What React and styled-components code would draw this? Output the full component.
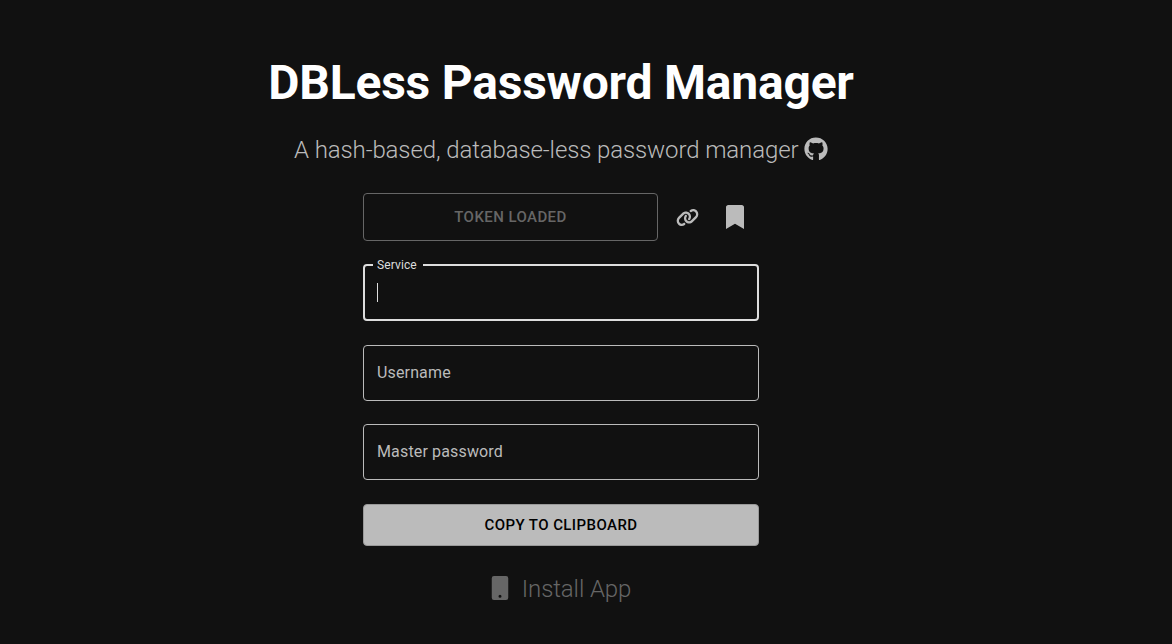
import React from 'react';
import styled, { createGlobalStyle } from 'styled-components';
import { FaGithub, FaBookmark } from 'react-icons/fa';
import { FaLink } from 'react-icons/fa6';

const GlobalStyle = createGlobalStyle`
  * { box-sizing: border-box; }
  body { margin: 0; background: #111; color: #fff; font-family: Roboto, sans-serif; overflow: hidden; }
`;
const Page = styled.main`
  width: 1122px;
  height: 644px;
  padding-top: 55px;
  display: flex;
  flex-direction: column;
  align-items: center;
`;
const Title = styled.h1`
  margin: 0;
  font-size: 48px;
  line-height: 56px;
  font-weight: 700;
  letter-spacing: -0.21px;
  white-space: nowrap;
`;
const Subtitle = styled.p`
  margin: 23px 0 0;
  display: flex;
  align-items: center;
  gap: 5.5px;
  height: 32px;
  font-size: 24px;
  font-weight: 300;
  letter-spacing: -0.11px;
  line-height: 32px;
  color: #bbb;
  white-space: nowrap;

  svg { margin-bottom: 2px; }
`;
const Form = styled.form`
  width: 396px;
  margin-top: 27px;
  display: flex;
  flex-direction: column;
`;
const TokenRow = styled.div`
  display: flex;
  align-items: center;
  height: 48px;
  margin-bottom: 17px;
`;
const Button = styled.button`
  font: 500 15px/26px Roboto, sans-serif;
  letter-spacing: 0.42px;
  text-transform: uppercase;
  border-radius: 4px;
  padding: 0;
`;
const TokenButton = styled(Button)`
  width: 295px;
  height: 48px;
  background: transparent;
  border: 1px solid #666;
  color: #666;
`;
const CopyButton = styled(Button)`
  height: 42px;
  background: #bbb;
  border: 1px solid #999;
  color: #000;
`;
const IconLink = styled.a`
  display: flex;
  color: #bbb;
  margin-left: ${p => p.$gap}px;
`;
const Field = styled.div`
  height: 56px;
  margin-bottom: ${p => p.$after}px;
  border: 1px solid #bbb;
  border-radius: 4px;
  padding: 0 13px 2px;
  display: flex;
  align-items: center;
  font-size: 16px;
  letter-spacing: 0.15px;
  color: #bbb;
`;
const ActiveField = styled.fieldset`
  height: 63px;
  margin: 0 0 24px;
  border: 2px solid #ddd;
  border-radius: 4px;
  padding: 0 12px;
  min-width: 0;
`;
const Legend = styled.legend`
  margin-left: -4px;
  padding: 0 6px 0 4px;
  font-size: 12px;
  line-height: 14px;
  letter-spacing: 0.11px;
  color: #ddd;
`;
const Caret = styled.div`
  width: 1px;
  height: 19px;
  margin-top: 11px;
  background: #ddd;
`;
const Install = styled.div`
  margin-top: 27px;
  display: flex;
  align-items: center;
  gap: 13px;
  height: 32px;
  font-size: 24px;
  font-weight: 300;
  letter-spacing: -0.11px;
  color: #666;

  svg { margin-bottom: 2px; }
`;

const PhoneIcon = () => (
  <svg width="18" height="24" viewBox="0 0 384 512" fill="currentColor">
    <path d="M64 0H320a48 48 0 0 1 48 48V464a48 48 0 0 1-48 48H64a48 48 0 0 1-48-48V48A48 48 0 0 1 64 0zM192 400a32 32 0 1 0 0 64 32 32 0 1 0 0-64z" />
  </svg>
);

export default function App() {
  return (
    <>
      <GlobalStyle />
      <Page>
        <Title>DBLess Password Manager</Title>
        <Subtitle>A hash-based, database-less password manager <FaGithub size={24} /></Subtitle>
        <Form>
          <TokenRow>
            <TokenButton type="button" disabled>Token loaded</TokenButton>
            <IconLink $gap={18}><FaLink size={23} /></IconLink>
            <IconLink $gap={24}><FaBookmark size={24} /></IconLink>
          </TokenRow>
          <ActiveField><Legend>Service</Legend><Caret /></ActiveField>
          <Field $after={23}>Username</Field>
          <Field $after={24}>Master password</Field>
          <CopyButton type="button">Copy to clipboard</CopyButton>
        </Form>
        <Install><PhoneIcon />Install App</Install>
      </Page>
    </>
  );
}
